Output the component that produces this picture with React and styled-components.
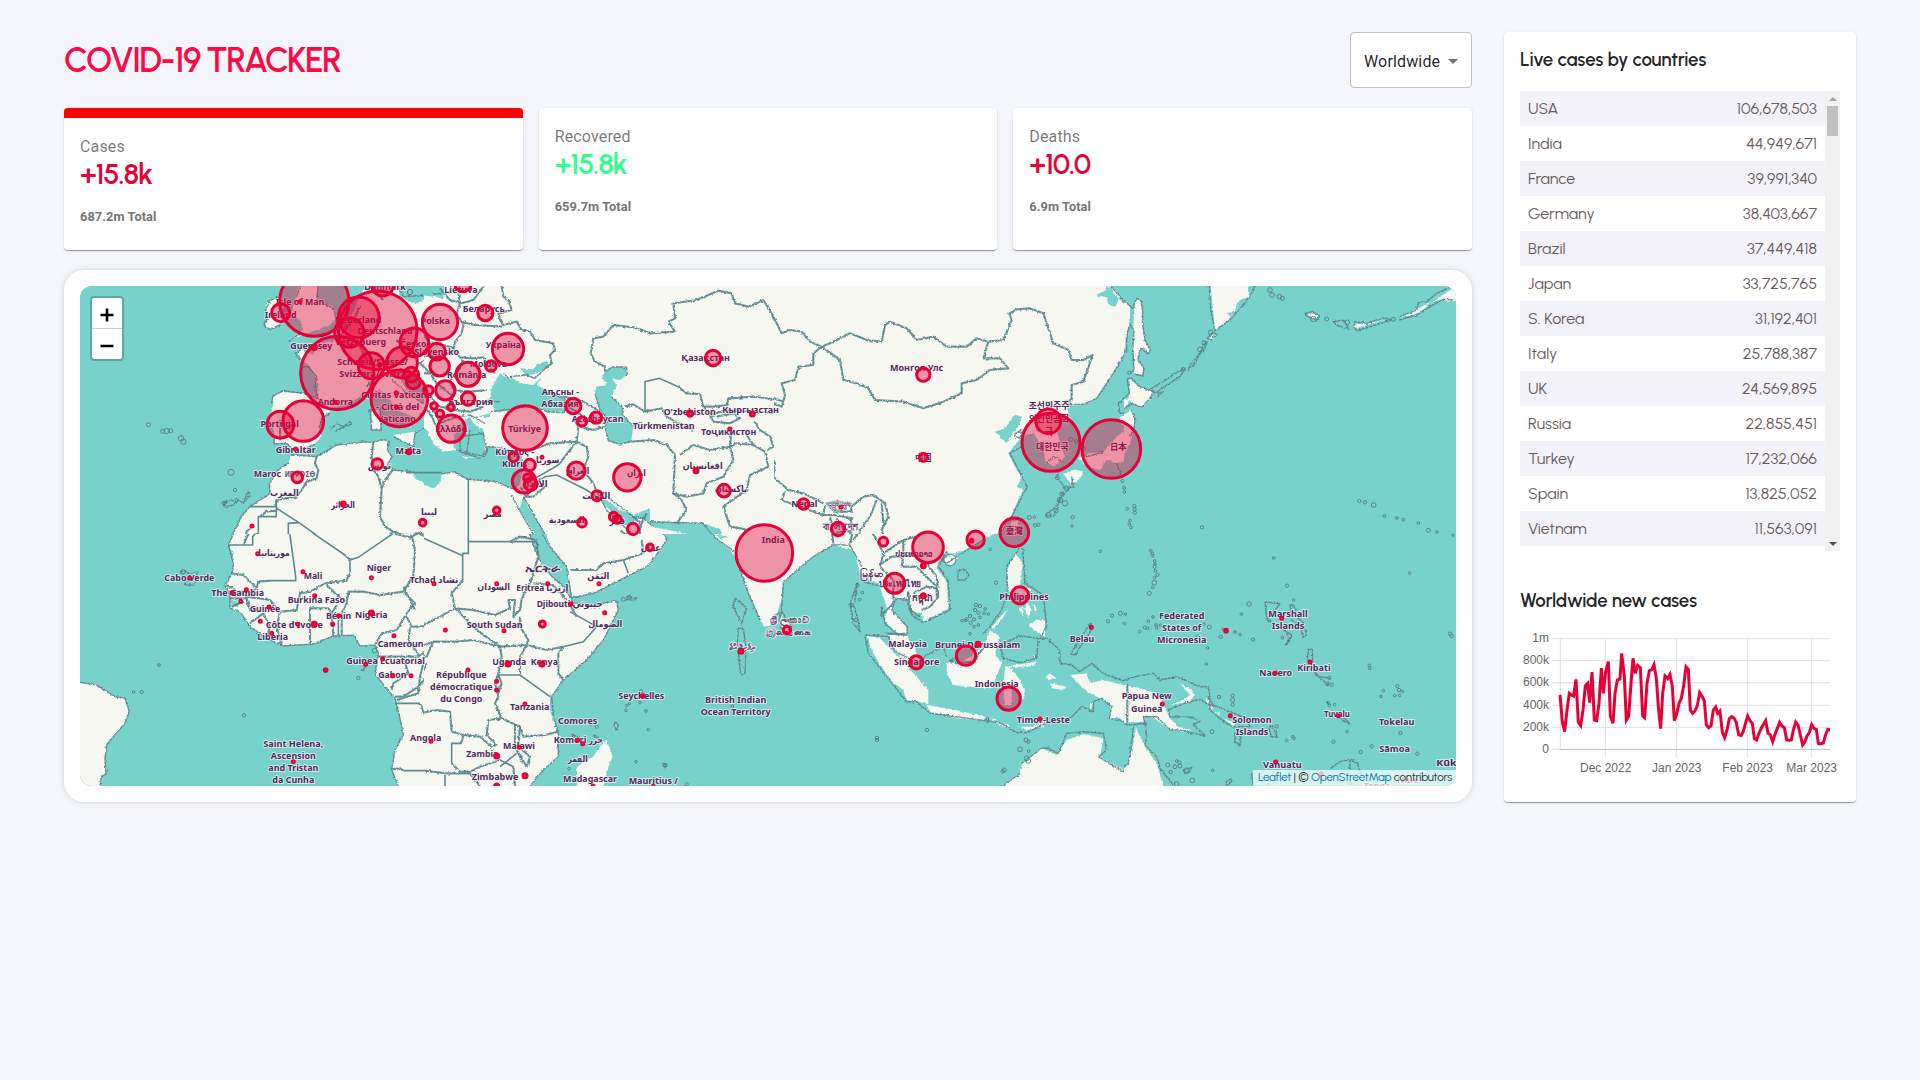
import React from "react";
import styled, { createGlobalStyle } from "styled-components";

const GlobalStyle = createGlobalStyle`
  * { box-sizing: border-box; margin: 0; padding: 0; }
  body { background: #f5f6fc; font-family: Roboto, "Liberation Sans", sans-serif; }
`;

const display = `Urbanist, Lato, "Noto Sans", sans-serif`;

const Page = styled.div`
  display: flex;
  justify-content: space-between;
  align-items: flex-start;
  padding: 32px 64px;
  min-height: 1080px;
`;
const Main = styled.main`
  width: 1408px;
  display: flex;
  flex-direction: column;
  gap: 20px;
`;
const Header = styled.header`
  height: 56px;
  display: flex;
  justify-content: space-between;
  align-items: center;
`;
const Title = styled.h1`
  padding-top: 1px;
  font: 600 34px/40px ${display};
  letter-spacing: -1.55px;
  color: #fc0a45;
`;
const Select = styled.button`
  width: 122px;
  height: 56px;
  display: flex;
  align-items: center;
  padding: 2px 13px 0;
  border: 1px solid #c0c0c4;
  border-radius: 4px;
  background: #fff;
  color: rgba(0, 0, 0, 0.87);
  font: 400 16px/19px Roboto, sans-serif;
  letter-spacing: 0.15px;
`;
const Caret = styled.span`
  margin-left: 8px;
  border: 5px solid transparent;
  border-top-color: #757575;
  border-bottom: 0;
`;
const Stats = styled.section`
  display: grid;
  grid-template-columns: repeat(3, 1fr);
  gap: 16px;
`;
const Card = styled.article`
  background: #fff;
  border-radius: 4px;
  box-shadow: 0 2px 1px -1px rgba(0, 0, 0, 0.2), 0 1px 1px rgba(0, 0, 0, 0.14), 0 1px 3px rgba(0, 0, 0, 0.12);
`;
const StatCard = styled(Card)`
  height: 142px;
  padding: 16px;
  overflow: hidden;
  border-top: ${(p) => (p.$active ? "10px solid red" : "0")};
`;
const StatLabel = styled.p`
  margin-top: 1px;
  font: 400 16px/24px Roboto, sans-serif;
  letter-spacing: 0.15px;
  color: rgba(0, 0, 0, 0.54);
`;
const StatValue = styled.h2`
  margin-top: -2px;
  font: 600 29px/34px ${display};
  letter-spacing: -1.2px;
  color: ${(p) => (p.$good ? "#32ff8a" : "#e60037")};
`;
const StatTotal = styled.p`
  margin-top: 16px;
  font: 700 12.8px/20px Roboto, sans-serif;
  letter-spacing: 0.07px;
  color: #757575;
`;
const MapCard = styled.section`
  height: 532px;
  padding: 16px;
  border-radius: 20px;
  background: #fff;
  box-shadow: 0 0 8px -4px rgba(0, 0, 0, 0.5);
`;
const MapFrame = styled.div`
  position: relative;
  height: 500px;
  border-radius: 12px;
  overflow: hidden;
  background: #76d2ca;
`;
const MapSvg = styled.svg`
  display: block;
  width: 1376px;
  height: 500px;
`;
const ZoomBox = styled.div`
  position: absolute;
  top: 10px;
  left: 10px;
  border: 2px solid rgba(0, 0, 0, 0.2);
  border-radius: 4px;
  background: #fff;
  background-clip: padding-box;
`;
const ZoomButton = styled.button`
  display: flex;
  justify-content: center;
  align-items: center;
  width: 30px;
  height: ${(p) => (p.$divided ? 31 : 30)}px;
  padding-top: 3px;
  border: 0;
  border-bottom: ${(p) => (p.$divided ? "1px solid #ccc" : "0")};
  background: none;
  color: #000;
`;
const Attribution = styled.div`
  position: absolute;
  right: 0;
  bottom: 0;
  width: 203px;
  height: 16px;
  padding: 0 5px;
  background: rgba(255, 255, 255, 0.7);
  font: 400 11.6px/15px ${display};
  letter-spacing: -0.24px;
  color: #333;
  white-space: nowrap;
  a { color: #0078a8; }
`;
const Side = styled(Card)`
  width: 352px;
  height: 770px;
  padding: 13px 16px 0;
`;
const SideTitle = styled.h3`
  font: 600 18.72px/30px ${display};
  letter-spacing: ${(p) => p.$spacing}px;
  color: rgba(0, 0, 0, 0.87);
`;
const TableBox = styled.div`
  display: flex;
  height: 460px;
  margin: 16px 0 35px;
  overflow: hidden;
`;
const Rows = styled.div`
  flex: 1;
`;
const Row = styled.div`
  display: flex;
  justify-content: space-between;
  align-items: center;
  height: 35px;
  padding: 0 8px;
  font: 400 16px/20px ${display};
  color: #6a5d5d;
  background: #fff;
  &:nth-child(odd) { background: #f3f2f8; }
`;
const ScrollTrack = styled.div`
  width: 15px;
  display: flex;
  flex-direction: column;
  align-items: center;
  padding: 6px 0 5px;
  background: #f1f1f1;
`;
const Arrow = styled.i`
  border: 4px solid transparent;
  ${(p) => (p.$down ? "border-top-color:#505050;border-bottom:0;margin-top:auto;" : "border-bottom-color:#a3a3a3;border-top:0;margin-bottom:5px;")}
`;
const Thumb = styled.i`
  width: 11px;
  height: 30px;
  background: #c1c1c1;
`;
const Chart = styled.svg`
  display: block;
  width: 330px;
  height: 160px;
  margin-top: 14px;
`;

const countries = [
  ["USA", "106,678,503"], ["India", "44,949,671"], ["France", "39,991,340"], ["Germany", "38,403,667"],
  ["Brazil", "37,449,418"], ["Japan", "33,725,765"], ["S. Korea", "31,192,401"], ["Italy", "25,788,387"],
  ["UK", "24,569,895"], ["Russia", "22,855,451"], ["Turkey", "17,232,066"], ["Spain", "13,825,052"],
  ["Vietnam", "11,563,091"],
];

/* Map tiles: origin on the map, drawn at three units per pixel.
   islands: x, y, r triples.  labels: x, baseline, text, width. markers: x, y, r. */
const tiles = [
  {
    x: 70, y: 270, h: 270,
    land: "M480,810Q500,770 515,738L540,710 600,670 598,640 625,600 655,578 665,555 690,556 740,560 800,525 880,516 910,516 940,508 958,515 952,540 966,560 952,585 968,600 1030,605 1035,625 1080,650V810ZM608,378L640,366 700,372 740,385 800,405 780,425 755,440 745,470 755,500 735,520 700,535 675,540 650,520 612,522 612,480 600,450 610,400ZM690,262L680,245 700,240 730,255 740,220 790,215 800,190 830,175 860,100 880,60 930,60 940,48 985,48 990,85 1040,100 1080,80V350L1060,330 1020,305 990,320 1010,360 1060,400 1075,440 1050,430 1040,460 1020,470 1030,440 980,420 960,390 930,360 910,370 870,380 840,400 800,410 740,390 745,340 720,290ZM970,495L1035,485 1030,530 1000,515ZM905,412L930,415 930,480 905,480ZM690,30L745,30 740,90 790,110 800,140 780,165 700,195 655,212 700,180 690,150 665,130ZM592,95L630,80 640,100 632,160 600,178 582,165 597,140 585,120Z",
    coast: "M480,810Q500,770 515,738L540,710 600,670 598,640 625,600 655,578 M665,555L690,556 740,560 800,525 880,516 910,516 940,508 958,515 952,540 966,560 952,585 968,600 1030,605M605,400L608,378 640,362 700,370 740,385M612,522L612,500M735,522L700,540 675,540 645,520 610,522M690,270L675,250 695,238M780,430L755,445 748,475M970,500L1030,530 1035,490 1070,470 1075,440 1050,430M900,420L930,415 935,480 905,480ZM655,215L690,190 660,175M690,48L680,80M592,95L630,78 M632,165L600,178 580,165 597,140 585,120 600,95M745,48L740,90 790,115 800,150M745,390L735,350 740,320 715,290 695,290M470,690L460,710M500,700L485,690 460,700 465,710 490,705 505,690 520,700 540,675 535,665 520,695M780,480L800,460 820,470 840,455 845,462 820,472 795,485M985,50L1000,80 1080,75M965,330L990,350 1010,370 1060,400",
    border: "M740,560L735,580 745,600 740,625 710,635 695,660 680,680 620,690 618,710M568,740L590,725 620,722M910,516L905,560 912,600 925,620 935,655 930,740 945,770 970,785 940,810M935,655L945,630 968,600M970,785L1020,800 1045,788 1080,800M525,810L530,785 545,770M870,110L850,150 810,200M890,190L870,230 890,270 940,300 1000,300M945,300L890,350M910,60L940,90M980,210L1010,240 1050,240M630,450V510M1080,255L1050,280 1080,310",
    straight: "M618,690V710H540M620,710L618,740H565V790L550,795 545,810M620,715L690,760 760,810M655,810V760L685,758M1008,608H1080",
    islands: "235,464,6 290,483,8 302,482,6 278,484,6 333,505,8 340,515,8 483,607,9 495,660,5 1020,66,8 500,690,5 462,700,6",
    labels: [[690,104,"Isle of Man",146],[632,143,"Ireland",95],[945,60,"Danmark",125],[864,160,"Nederland",140],[945,191,"Deutschland",165],[873,226,"Lëtzebuerg",150],[724,236,"Guernsey",126],[1030,230,"Česko",78],[908,285,"Schweiz/Suisse/",212],[908,321,"Svizzera/Svizra",200],[980,384,"Civitas Vaticana",212],[983,420,"- Città del",130],[980,457,"Vaticano",115],[796,406,"Andorra",106],[629,471,"Portugal",115],[677,548,"Gibraltar",120],[1015,552,"Malta",77],[592,620,"Maroc",82],[690,620,"ⵍⵎⵖⵔⵉⴱ",92,1],[643,677,"المغرب",86],[819,714,"الجزائر",72],[928,596,"تونس",70]],
    markers: "733,95,104 632,128,27 690,95,3 938,45,33 923,181,118 866,142,61 838,188,44 802,309,110 732,232,7 796,397,3 904,287,39 996,278,46 930,284,3 1024,314,22 1030,335,21 1033,217,43 988,385,85 979,368,3 980,411,3 700,453,61 631,464,40 677,537,3 1017,545,6 922,582,16 682,622,16 820,702,6 546,768,3",
  },
  {
    x: 420, y: 270, h: 270,
    land: "M0,0H1080V810H0Z",
    sea: "M0,30H75L70,85 40,80 0,75ZM0,465L20,480 40,520 70,545 110,540 130,565 190,560 205,530 245,540 280,545 300,540 310,580 300,640 285,660 230,635 145,628 100,605 65,612 60,640 40,655 15,645 0,630ZM110,470L150,440 160,460 190,480 195,540 200,560 120,560 100,530ZM220,410L195,395 215,380 210,360 240,310 275,335 270,320 300,340 340,345 365,320 350,345 380,360 430,380 445,410 430,425 380,425 330,410 270,420 230,428ZM300,295L340,298 350,283 382,273 385,290 350,310 320,318ZM165,440L215,430 205,442ZM555,305L580,290 620,292 620,315 600,330 575,325 590,345 575,380 610,415 605,430 640,470 633,515 600,522 565,512 555,470 565,450 540,420 525,370 530,350 560,345 545,320ZM270,670L295,715 345,790 350,810H385L350,750 320,705 310,680 300,715ZM530,665L545,668 560,690 600,720 640,735 670,722 690,715 690,755 850,760 905,780V795L890,810 860,810 840,800 700,770 680,750 660,745 630,765 590,765 570,720 550,700Z",
    coast: "M145,628L100,605 65,612M145,628L230,635 285,660M280,545L245,535 205,530 195,560 110,540M210,425L270,418 330,405 380,425 430,428 445,410 430,385 380,362M275,335L250,310M555,305L580,290 620,292 620,315M525,370L540,420 565,450 555,470 565,512 600,522 635,515M575,380L610,415 605,430 640,470M275,675L295,715 345,800M310,680L350,750 385,810M530,665L560,720 590,750 640,795M560,680L600,710 640,740 670,745 700,770M690,755L850,760 880,800M115,440L150,435 195,460M120,500L190,490 200,540 180,565 120,545ZM150,480L140,550M270,320L320,315 345,325 370,300M40,72L90,68M205,395L240,395",
    border: "M245,48L250,80 265,90 275,120 235,130 240,150 250,165 290,155 305,180 330,185 345,210 400,220 405,240 390,255 395,280 370,300M120,155L165,165 250,170M120,48L115,70 120,100 110,130 130,165 125,190 105,215 100,240 120,262 160,265 190,262 205,290 225,310M60,55L90,90 125,100 160,90 190,50M0,280L30,310 50,340 95,375M100,360L150,365 200,360M0,310H30M95,375L100,420 150,425 190,410M105,240L60,265 20,255 0,265M0,180L30,220 70,225 105,235M100,360L90,330 115,300 130,270M10,350L40,390 60,410 115,420M40,420L60,460 110,440M0,400L30,430 50,470M555,305V290L525,275 512,250 520,205 550,200 580,165 640,172 690,190 765,185 745,155 765,145 760,100 830,90 895,62 935,70 945,100 985,110 1030,90 1055,130 1080,190M615,410L640,403 675,425M675,425L725,415 740,440 790,470 820,480M775,350L800,370 840,372 850,410 890,410 920,405 925,385 1000,380 1080,390M890,440L940,430 960,445 930,460 880,455 870,435 920,420 1080,430M850,410L880,440M1000,450L1020,480 1050,500 1060,530 1040,540M935,470L930,530M700,510L740,525 765,555 760,670 800,680 850,670 860,640 910,620 940,570 930,530 950,520 1000,525M635,515L700,510M930,530L870,540 820,525 780,555M760,670L785,690 800,720 770,760M1000,525L1035,545 1045,590 990,615 980,660 910,710 930,770 990,780M1000,525L970,480M310,550L390,520 470,515 500,530 505,560 490,600 520,640 530,665M470,515L450,540 415,585M345,640L320,680 300,650M345,640L375,650 340,680 310,680M445,410L490,440 540,460M460,445L475,470 470,515M430,380L490,395 540,425M480,470L520,480 550,470M600,780L625,800 660,800V770L680,730M640,740L660,760",
    straight: "M675,425V335L718,325 775,350M145,628V810M415,585L345,625M345,640L375,620 410,615 500,660 530,680M0,608H65",
    islands: "",
    labels: [[123,70,"Lietuva",100],[191,127,"Беларусь",126],[46,161,"Polska",88],[50,254,"Slovensko",134],[250,235,"Україна",106],[205,291,"Moldova",112],[140,324,"România",118],[152,405,"България",134],[94,486,"Ελλάδα",96],[314,487,"Türkiye",98],[421,374,"Аҧсны -",112],[420,411,"Абхазия",112],[533,455,"Azərbaycan",155],[284,555,"Κύπρος -",116],[284,590,"Kıbrıs",76],[383,578,"سوريا",70],[473,612,"العراق",70],[345,650,"الأردن",76],[649,618,"ایران",56],[529,686,"الكويت",84],[592,762,"قطر",46],[440,758,"السعودية",108],[218,742,"مصر",54],[27,734,"ليبيا",48],[857,273,"Қазақстан",146],[809,434,"O'zbekiston",156],[731,478,"Türkmenistan",186],[992,430,"Кыргызстан",170],[926,494,"Тоҷикистон",166],[848,598,"افغانستان",120],[933,667,"پاکستان",96]],
    markers: "60,156,53 129,40,25 196,129,23 264,237,47 51,245,25 59,289,29 213,288,16 144,313,36 76,361,29 144,386,20 25,361,14 42,408,10 60,431,11 93,412,10 94,476,41 315,474,67 460,408,23 486,454,14 528,443,17 281,561,14 366,562,3 329,585,17 312,634,35 323,623,12 332,643,19 469,602,26 622,622,41 531,677,15 230,721,10 8,758,10 486,758,13 581,740,13 592,748,12 639,777,17 810,431,8 997,432,6 929,477,3 828,602,6 912,662,19 879,264,23",
  },
  {
    x: 770, y: 270, h: 270,
    land: "M0,0H1080V810H0Z",
    sea: "M1010,20L1030,70 1050,90 1080,120V20ZM978,75L1005,62 1010,48 1030,55 1050,80 1035,110 1015,105 1010,82ZM1080,170L1065,250 1030,310 980,385 940,405 905,408 900,385 890,400 895,430 860,480 870,520 885,560 850,590 825,570 820,530 800,505 790,490 755,500 735,525 715,550 735,590 755,625 740,650 760,660 740,700 725,735 690,790 670,810H1080ZM675,485L705,475 735,435 755,440 745,470 720,500 710,520 690,500Z",
    islandLand: "M880,612L915,598 940,605 930,625 905,645 890,625ZM925,565L960,550 1000,545 1040,500 1080,470V570L1040,580 1010,570 990,600 950,590ZM1050,440L1080,430V480L1050,460ZM725,755L745,752 740,790 725,810 712,790Z",
    coast: "M1022,48L1050,80 1080,118M1080,165L1065,250 1030,310 980,385 940,403 880,405M755,530L720,550 772,650 725,740 690,790 640,810M735,490L755,480 750,505 735,500ZM870,600L860,620 885,655 910,650 905,620M900,650L870,690 850,740 830,735 860,705 880,665M1080,330L1075,370 1045,400 1050,430 1080,430M940,550L950,560 1000,545M830,580L850,560 880,575M1040,580L1055,620",
    border: "M0,120L35,190 60,180 95,185 120,215 155,230 190,215 240,190 290,210 335,215 345,165 360,155 410,175 440,210 490,200 530,230 590,230 620,205 655,215 700,210 725,150 718,130 740,118 780,115 820,130 850,220 895,240 905,270 940,270 968,255 940,335 905,345V390L885,395M155,230L210,270 220,330 260,340 295,355 315,390 400,395 460,415 520,395 575,370V340L620,330 660,300 715,295 690,265 640,265 655,215M155,230L130,250V285L85,290 75,330 35,340 45,375 35,410 0,395M0,380L40,395M0,550L15,580 10,620 55,660 100,670 160,700M35,690L45,665M35,690L100,715 160,735 165,705M160,735L190,735 250,745M170,700L200,695 240,700 245,725 190,725ZM245,710L280,680 310,675 345,700 355,740 335,780 345,810M320,690L300,740 270,780 265,810M240,745L250,780 190,790M180,740L195,810M200,745L215,770 245,790M335,700L340,760M400,810L420,800",
    islands: "1078,308,7 862,623,6 890,655,7 870,690,8 875,672,6 885,700,8 858,722,7 835,735,8 908,742,5 906,768,4 778,742,6 793,742,4 795,766,5 805,764,5 1058,633,5 1063,653,5 1063,666,4 1073,716,4 902,508,6 918,514,5 940,535,6 805,478,5",
    labels: [[440,303,"Монгол Улс",160],[460,573,"中国",50],[837,416,"조선민주주",122],[837,455,"의인민공화",122],[837,495,"국",25],[847,539,"대한민국",98],[1045,541,"日本",50],[103,710,"Nepal",78],[208,715,"འབྲུག་ཡུལ",70,1],[210,780,"বাংলাদেশ",104],[733,791,"臺灣",52]],
    markers: "460,314,20 460,562,12 835,454,37 843,517,87 1024,537,88 101,702,16 213,711,3 204,777,20 733,787,43 -17,849,85",
  },
  {
    x: 1120, y: 270, h: 270,
    land: "M0,80L30,110 30,160 18,190 15,240 0,262ZM45,90L60,85 66,110 65,160 75,210 90,240 85,248 70,232 55,245 50,270 70,295 68,315 40,310 42,270 38,230 40,165ZM30,325L55,350 100,365 90,390 65,412 35,400 25,385 28,360ZM10,435L35,420 45,450 42,480 30,520 0,570V480ZM272,30L272,48 285,182 325,150 345,128 385,80 383,30ZM930,105L960,80 1030,35V88L985,95 960,88Z",
    sea: "M385,85Q345,85 348,120L340,130 360,118 385,90ZM322,130L350,120 335,145Z",
    islandLand: "M0,390L30,385 20,410 0,410ZM265,205L290,190 280,210ZM700,165L750,158 810,148 760,160 705,175ZM840,140L880,125 930,95 915,115 880,135ZM565,130L595,135 590,145 565,138Z",
    coast: "M0,80L38,115 50,85 62,90 68,120 68,160 75,210 92,240 85,252 62,235 55,265 72,295 68,318 42,312M0,268L20,240V195L30,165 42,180 38,240 42,300 30,310M20,325H35L60,350 100,365 90,385 65,412 35,400 0,425M268,48L272,120 285,182 330,150 370,105 395,70 405,48M35,420L45,450 42,480 30,500M22,330L28,370 5,390M275,190L290,190 275,210 262,205ZM245,225L262,215 250,245ZM235,255L245,240 225,280 205,298 210,285ZM165,310L195,295 180,320 140,345 105,370 95,355 145,325ZM110,370L130,365 112,378M555,130L575,125 600,138 590,150 560,138ZM640,155L670,150 688,178 650,165ZM700,170L705,155 740,160 790,143 815,150 750,170 710,182ZM838,140L890,120 895,98 920,95 950,70 990,52M838,150L890,135 930,110 970,88 1000,90",
    islands: "450,60,7 456,75,7 478,80,7 487,85,6 272,187,7 252,218,6 240,238,7 190,298,6 620,147,6 682,157,7 580,147,8 820,148,6 718,693,5 735,697,5 761,705,7 793,738,4 831,744,4 850,749,4 895,759,4 925,781,6 951,786,4 999,796,4 246,772,5 8,633,4 13,654,4 13,666,4 22,716,4 43,708,5 44,718,5 44,728,5 30,751,4 28,762,4 33,772,4 28,308,5",
    labels: [], markers: "",
  },
  {
    x: 70, y: 530, h: 280,
    land: "M495,0L475,45 490,100 487,130 465,165 480,195 480,235 510,245 540,290 590,325 640,348 730,342 790,318 850,316 870,348 915,345 925,370 915,430 945,470 975,505 990,565 1000,615 975,660 965,720 985,768V840H1080V0ZM0,455L80,465 135,500 165,505 178,545 165,580 130,620 110,640 105,690 108,730 95,740 90,840H0Z",
    sea: "M478,55L490,65 488,80 480,75ZM482,210L505,215 505,232 485,228Z",
    coast: "M495,0L475,45 490,100 487,130 465,165 480,195 480,235 510,245 540,290 590,325 640,348 730,342 790,318 850,316 870,348 915,345 925,370 915,430 945,470 975,505 990,565 1000,615 975,660 965,720 985,768M30,457L80,465 135,500 165,505 178,545 165,580 130,620 110,645 105,690 108,732 95,740 90,768M330,125L345,120 355,132 380,125 382,145 372,165 345,165 350,145ZM878,420L885,405 888,412 880,422Z",
    border: "M520,45L540,0M600,152L565,155 560,175 550,165 520,135 485,130M970,10L1020,22 1045,10 1080,25M840,90L825,75M840,125L830,152 765,160 720,185 690,190 680,240 630,245M1025,15L1035,60 1030,140 1000,185 930,195 880,185 835,185 830,220 815,250V315M770,165L800,195 825,215M800,225L785,250 790,318M720,235V340M720,235H775L785,250M1000,185L1035,220 1010,250 980,300 935,310 915,345M1000,170L1035,240M1010,260L1025,290 1080,288M1020,295L1015,330 1050,380M925,380H1040L1080,360M1000,380L1015,430 970,460 965,480M1080,430L1045,470 1000,500 975,500M1065,380L1050,440 1045,490 980,510M1050,520L1065,555H1080M965,718L990,715 1000,722M470,165L530,200 600,210 630,245 620,290 635,345M480,205H530L535,230M485,230L520,215M540,280L580,250 600,290 590,320M560,175L530,200M480,185H540M530,205L540,240 570,245",
    straight: "M475,45H548V20L565,0M658,0L677,140V152H600M715,0L825,75M840,125V90L865,82 970,10M805,250V315M975,520H1050M1000,722H1080",
    islands: "267,405,4 191,486,4 215,486,5 522,556,5 865,444,5 914,362,7 340,125,6",
    labels: [[612,78,"موريتانيا",94],[729,146,"Mali",56],[927,122,"Niger",74],[358,153,"Cabo Verde",150],[503,197,"The Gambia",158],[739,220,"Burkina Faso",172],[585,245,"Guinée",92],[806,266,"Bénin",76],[904,265,"Nigeria",98],[673,293,"Côte d'Ivoire",172],[608,331,"Liberia",92],[992,350,"Cameroun",138],[947,401,"Guinea Ecuatorial",236],[967,445,"Gabon",84],[670,652,"Saint Helena,",180],[670,688,"Ascension",135],[670,724,"and Tristan",150],[670,760,"da Cunha",126]],
    markers: "563,71,3 699,125,3 359,144,3 486,188,3 529,179,3 512,214,3 597,231,3 734,197,3 571,274,3 605,310,3 683,283,3 733,283,6 788,283,3 806,257,3 904,249,6 904,143,3 972,317,3 938,386,3 887,403,3 767,420,4 968,437,3 1023,437,3 670,695,3",
  },
  {
    x: 420, y: 530, h: 280,
    land: "M0,0H325L345,60 385,130 440,180 460,220 520,225 590,212 595,240 550,330 500,390 430,450 395,500 400,560 415,610 415,680 370,720 330,768V840H0ZM375,0L390,50 440,110 455,200 520,190 600,150 680,110 720,60 742,25 720,0ZM870,0L900,35 930,60 950,85 985,190 1020,270 1035,290 1060,280 1080,240V0ZM560,630L578,680 565,710 550,768V840H475L470,710 520,680 540,650Z",
    sea: "M890,15L925,18 900,28ZM390,490L400,505 398,570 390,540Z",
    coast: "M358,0L390,50 440,110 455,205 520,190 600,150 680,110 720,60 742,25 720,0M325,0L345,60 375,120 435,175 460,220 520,225 590,212 595,240 550,330 500,390 430,450 395,500 400,560 415,610 415,680 370,720 330,768M865,0L900,35 945,65M950,85L985,190 1020,270M945,203L980,235 965,282 940,230ZM955,295H970L978,350 975,430 962,435 952,340ZM620,200L650,205 640,212 620,208ZM585,574L595,585 590,600 582,588ZM455,612L480,625 M520,615L535,625M730,700L740,705 735,715Z",
    border: "M128,150L95,190 105,235 60,260 0,290M350,35L355,80 330,160 305,205 300,240 280,260 285,210 265,210 270,235 225,255 160,240 105,235 170,300 240,350 320,345M270,35L300,20 350,30M300,260V290L325,330 320,345 380,360 430,350M470,260L450,225M340,160L400,165 440,210M430,350L415,370V430L430,450M0,350L40,335 110,335 160,330 240,350 245,380 235,430 225,460 235,500 225,520 245,565 205,570 200,615 230,645 215,650 180,620 130,615 125,640M95,700L120,725H150L180,710 240,690M320,345L300,380V435M245,565L300,590 310,620 375,615 415,605M300,590L295,650 330,680 320,710 290,660M285,580L285,650 310,700M0,550L50,540 90,545 95,605 130,615M0,720L80,730H150M280,710L285,768M150,730L180,768M0,385L20,380 40,335M0,445L20,400M450,120L530,120 550,100 610,90 670,70 665,30M235,435L245,460 235,490",
    straight: "M145,0V70H128V150M145,35H350M0,20L128,77M235,435H300L390,500M430,350L490,335 530,290 450,245M610,90L625,130M75,768V735M240,710L290,670M240,690L280,710M125,640H95V700",
    islands: "610,208,6 628,202,6 648,695,4 800,763,5 735,706,6 685,599,4 678,543,4 618,541,4 663,484,5 668,494,5 660,518,4 628,520,4 620,527,4 447,716,4 513,582,4 530,590,5 937,528,4 460,618,4 526,620,4",
    labels: [[42,160,"Tchad تشاد",146],[221,180,"السودان",98],[366,126,"ኤርትራ",102],[367,182,"Eritrea إرتريا",156],[449,230,"Djibouti جيبوتي",198],[535,147,"اليَمَن",66],[692,64,"عمان",60],[556,290,"الصومال",102],[224,295,"South Sudan",168],[268,404,"Uganda",102],[373,404,"Kenya",82],[124,443,"République",152],[124,480,"démocratique",188],[124,516,"du Congo",126],[329,540,"Tanzania",118],[17,634,"Angola",94],[473,582,"Comores",118],[450,639,"Komori",98],[527,639,"جزر",42],[473,696,"القمر",60],[510,757,"Madagascar",162],[700,763,"Mauritius /",148],[187,680,"Zambia",96],[297,656,"Malawi",96],[225,750,"Zimbabwe",140],[664,508,"Seychelles",138],[947,518,"British Indian",184],[947,554,"Ocean Territory",210],[967,360,"ދިވެހިރާއްޖެ",80,1]],
    markers: "42,161,3 230,161,3 383,161,3 452,222,4 537,161,3 554,248,3 690,52,10 76,300,3 252,302,3 367,282,9 264,402,6 366,402,6 144,420,3 230,454,3 230,480,3 315,522,3 33,634,3 230,678,6 298,652,3 315,737,6 230,768,6 473,630,3 488,641,3 668,498,4 519,768,3 700,768,2 963,364,6",
  },
  {
    x: 770, y: 530, h: 280,
    land: "M0,0H690L640,30 590,60 545,72 530,65 505,95 500,115 530,155 535,235 460,275 455,245 430,255 410,205 375,205 365,240 410,290V315L385,310 345,275 350,230 330,170 325,160 275,140 250,60 190,45 130,80 40,155 35,210 20,250 0,260ZM30,255L65,290 60,318 35,312ZM520,90L545,70 565,85 545,105 525,103ZM355,315L400,310 430,340 450,400 420,400 380,370ZM290,318L330,325 380,375 440,440 475,480V520L410,510 400,480 360,450 310,370ZM470,525L560,540 645,560 640,572 560,565 480,545ZM530,400L580,395 640,350 660,300 690,320 675,370 695,400 665,475 600,470 550,465 530,430ZM705,410L800,395 790,408 720,412 750,450 765,485 755,515 740,480 725,475 725,525 705,525 700,470ZM715,180L712,120 735,70 758,100 750,170 780,175 780,195 730,190ZM775,185L790,200 785,215ZM775,285L800,270 825,270V320L790,300ZM665,290L710,240 705,255 670,300ZM900,435L950,430 960,460 1000,450 1080,470V580L1040,560 1020,570 1020,520 960,490 940,475ZM700,768L750,730 755,700 815,655 860,675 890,630 940,612 1000,625 990,680 1060,720 1075,700 1080,690V840H690ZM680,580L720,585 715,592 690,588ZM745,590L790,590 840,565 820,590 770,600ZM840,460L890,470 880,480 845,475ZM665,565L680,568 672,575Z",
    islandLand: "M745,235L760,230 760,260ZM770,215L785,240 775,265 765,245ZM790,220L800,235 795,250ZM790,375L800,378 796,390ZM825,440L840,430 860,445 835,450ZM750,490L760,500 752,510ZM960,515L970,525 960,540Z",
    coast: "M190,45H240L275,110 M190,45L130,80 40,155 35,240 20,255M640,30L590,60 530,100 515,90 530,65 505,110 535,155 540,240 460,278 425,255 410,208 378,205 365,240 412,290V310L380,312 345,280 335,230M285,320L295,370 410,515 440,515 480,550 690,578 740,608 770,608 850,570M285,315L360,320M355,320L375,365 450,400 460,380 520,350M748,55L710,110 712,185 695,240 660,290M758,55L765,160 820,195 830,290 810,325 750,318 690,345 700,385 750,398 800,385 805,325 830,325 870,360V400L905,405 930,425 965,400 1000,430 1080,460M660,290L640,310M1080,580L1018,565 1025,530 995,505 970,515V545L935,530 900,565 850,580M262,160L240,220 250,280 270,305 262,260 252,230ZM280,155L330,168M35,245L65,290 60,318 40,315 28,270ZM565,120H585L597,135 585,150 562,150ZM960,280L970,290 915,375 902,372ZM700,768L750,730M755,700L815,655 835,655 865,670 890,610 940,605 1000,610 1010,660 985,680 1060,725 1080,690M530,380L520,350",
    border: "M185,0L190,40M250,0L240,40M400,30L340,70 330,110 370,150V220L340,250M400,30V80L395,110H440L470,140 500,170V200M400,30L440,20M430,190L470,170 500,175M415,185L420,240 450,260M470,100L500,140 505,200 480,230 455,240M335,100L365,80 400,80M340,70L320,30 300,0M270,0L250,30M540,390L560,400 610,395 650,340M540,395L560,380M350,310L410,315M335,230V260",
    straight: "M1075,460V580",
    islands: "540,90,18 678,158,5 661,58,4 991,64,4 277,188,4 269,209,4 262,165,5 256,190,5 245,225,5 258,270,5 471,600,5 321,624,5 321,630,5 768,630,6 776,635,5 750,658,7 776,663,4 703,720,6 698,724,5 600,311,4 1014,274,5 1026,257,5 1051,250,6 1066,252,4 1063,280,4 0,543,3 618,225,5 630,228,5 615,240,5 625,248,5 645,237,4 655,252,4 642,250,4 600,258,5 612,268,5 590,268,5 576,272,4 586,271,4 602,278,5 625,285,4 612,290,4 630,262,4 770,685,7 775,693,7 652,567,4",
    labels: [[10,38,"India",70],[306,142,"မြန်မာ",72],[432,80,"ປະເທດລາວ",112],[389,172,"ประเทศไทย",126],[457,213,"កម្ពុជា",62],[58,280,"ශ්‍රී ලංකාව",118,1],[55,315,"இலங்கை",136],[413,351,"Malaysia",116],[623,353,"Brunei Darussalam",256],[440,406,"Singapore",136],[680,471,"Indonesia",132],[820,578,"Timor-Leste",160],[762,210,"Philippines",148],[936,337,"Belau",74]],
    markers: "340,35,13 474,52,46 617,29,26 605,32,4 374,160,30 460,107,6 460,197,6 750,196,26 588,377,29 624,343,6 439,397,20 716,506,35 810,567,3 964,292,3 51,300,11",
  },
  {
    x: 1120, y: 530, h: 280,
    land: "M0,462L60,475 120,495 130,525 150,565 175,590 215,600 190,605 150,600 110,570 80,555 70,575 0,580ZM48,595L75,650 110,700 130,768V840H0V722L25,700 40,640ZM180,460L215,480 225,495 205,515 150,525 190,510 210,495ZM255,500L275,520 280,540 265,530ZM285,545L300,548 298,556ZM335,555L365,565 360,572ZM310,565L345,580 340,590Z",
    coast: "M0,455L45,440 100,430 120,450 170,440 205,455 240,470H265L275,530 240,508 200,518 145,540 150,560 215,562 240,575 220,582 255,618 180,600 150,600 110,560 70,560 75,580 30,585 0,578M40,590L35,640 25,700 0,722M75,580L80,620 75,645 110,680 120,715 160,765M265,500L280,525 330,545 380,565 390,590 340,590 310,575 270,540ZM345,610L362,620 360,648 345,635ZM445,590L460,590 472,622 455,620ZM435,215L480,222 440,268ZM510,225L520,225 535,265 545,270 560,315 550,322 540,290 515,270ZM440,268L515,315 498,345 515,320M495,345L510,330 485,280M565,358H577L578,395 562,390ZM580,425L600,440 630,445 625,465 600,445ZM665,555L690,582 682,580 655,560ZM632,715L660,695 690,688 712,700 725,740M690,688V720M395,730L400,768M318,755L335,745 335,755 320,768ZM190,720L215,712 210,725 195,730ZM620,515L628,525",
    border: "M22,462V578",
    islands: "461,84,4 869,130,4 501,167,5 521,210,4 387,222,7 364,252,4 926,3,5 951,6,4 999,15,4 99,261,4 85,273,4 74,293,5 83,295,4 59,305,4 13,281,4 16,252,4 4,248,5 268,291,6 251,283,4 345,306,4 360,314,4 302,321,5 310,298,4 262,354,4 259,402,4 399,329,5 487,323,4 990,311,5 995,318,5 748,406,4 749,415,4 232,320,4 108,285,4 110,293,4 122,286,4 92,62,4 97,70,4 99,77,4 104,93,4 105,102,4 104,110,5 106,122,4 112,134,5 104,143,4 103,158,7 98,172,4 88,190,6 297,501,5 338,497,5 338,510,6 338,524,5 276,605,6 278,721,4 217,751,7 470,589,5 500,631,4 518,620,4 522,625,4 640,635,5 722,666,5 755,649,5 841,609,5 892,671,5 681,605,4 644,524,4 625,518,4 628,526,4 790,482,4 783,499,4 832,468,5 837,480,5 847,484,4 824,497,4 839,496,4 143,705,6 152,726,5 165,710,6 170,693,4 178,697,5 180,708,6 200,721,7 170,762,7 621,463,4 635,464,5 628,443,5 690,760,5 445,765,5",
    labels: [[185,267,"Federated",136],[185,303,"States of",118],[185,340,"Micronesia",148],[504,260,"Marshall",118],[504,296,"Islands",98],[467,438,"Naoero",98],[582,424,"Kiribati",100],[651,562,"Tuvalu",78],[830,586,"Tokelau",106],[824,667,"Sāmoa",92],[984,707,"Kūki",70],[487,714,"Vanuatu",116],[80,508,"Papua New",150],[80,545,"Guinea",94],[396,578,"Solomon",118],[396,614,"Islands",98],[863,760,"Niue",64],[771,776,"Tonga",80]],
    markers: "318,302,4 485,265,3 570,396,3 466,429,3 127,522,3 331,557,3 655,557,3 467,696,3 604,732,3",
  },
];

const triples = (s) => (s ? s.split(" ").map((t) => t.split(",").map(Number)) : []);

/* Neighbouring tiles overlap by ten pixels; four are trimmed off each side so the joins stay clean. */
const Tile = ({ t }) => (
  <svg x={t.x + 4} y={t.y + 4} width="352" height={t.h - 8} viewBox={`12 12 1056 ${t.h * 3 - 24}`}>
    <rect width="1080" height="840" fill="#76d2ca" />
    <g filter="url(#rough)">
      <path d={t.land} fill="#f6f7f1" />
      {t.sea && <path d={t.sea} fill="#76d2ca" />}
      {t.islandLand && <path d={t.islandLand} fill="#f6f7f1" />}
      <g fill="none" strokeLinejoin="round">
        <path d={t.coast} stroke="#5f9c9e" strokeWidth="4.5" opacity=".75" />
        <path d={t.coast} stroke="#6d6677" strokeWidth="2.8" strokeDasharray="8 4" opacity=".8" />
        <path d={t.border} stroke="#5c9295" strokeWidth="6.5" opacity=".85" />
        <path d={t.border} stroke="#506f78" strokeWidth="2.6" strokeDasharray="10 4" opacity=".75" />
      </g>
    </g>
    {t.straight && <path d={t.straight} fill="none" stroke="#5c8b90" strokeWidth="4.8" />}
    <g fill="none" stroke="#5a7f87" strokeWidth="2.8">
      {triples(t.islands).map(([x, y, r], i) => <circle key={i} cx={x} cy={y} r={r} />)}
    </g>
  </svg>
);

const MapLabel = styled.text`
  font: 700 ${(p) => (p.$faint ? 8 : 9.2)}px "Noto Sans", "DejaVu Sans", "Noto Sans CJK KR", "Noto Sans CJK SC", sans-serif;
  fill: ${(p) => (p.$faint ? "#70607e" : "#522d5e")};
  stroke: rgba(250, 248, 248, 0.65);
  stroke-width: 2px;
  stroke-linejoin: round;
  paint-order: stroke;
  text-anchor: middle;
`;

const WorldMap = () => (
  <MapSvg viewBox="80 286 1376 500">
    <defs>
      <filter id="rough" x="0" y="0" width="1" height="1">
        <feTurbulence type="fractalNoise" baseFrequency=".12" numOctaves="2" seed="4" />
        <feDisplacementMap in="SourceGraphic" scale="9" xChannelSelector="R" yChannelSelector="G" />
      </filter>
    </defs>
    {tiles.map((t) => <Tile key={`${t.x}-${t.y}`} t={t} />)}
    {tiles.map((t) =>
      t.labels.map(([x, y, text, w, faint], i) => (
        <MapLabel key={`${t.x}-${t.y}-${i}`} $faint={faint} x={t.x + x / 3} y={t.y + y / 3} textLength={w / 3} lengthAdjust="spacingAndGlyphs">{text}</MapLabel>
      ))
    )}
    <g fill="#e60037" fillOpacity=".4" stroke="#e60037" strokeWidth="3">
      {tiles.map((t) =>
        triples(t.markers).map(([x, y, r], i) => <circle key={`${t.x}-${t.y}-${i}`} cx={t.x + x / 3} cy={t.y + y / 3} r={r / 3} />)
      )}
    </g>
  </MapSvg>
);

const yTicks = [[236, "1m"], [302, "800k"], [368, "600k"], [436, "400k"], [502, "200k"], [568, "0"]];
const xTicks = [[316, "Dec 2022"], [529, "Jan 2023"], [742, "Feb 2023"], [934, "Mar 2023"]];
const series = "180,405 187,485 194,515 201,450 208,400 214,405 221,408 228,358 235,487 242,497 249,450 256,377 263,370 269,428 276,336 283,480 290,482 297,430 304,324 310,400 317,335 325,305 331,468 339,490 345,400 352,360 360,357 365,280 373,350 379,480 386,468 393,370 399,295 406,340 413,316 421,323 428,468 434,473 441,370 448,332 456,328 462,314 469,355 475,440 482,506 488,400 495,348 503,356 510,343 517,380 523,482 530,462 537,430 544,415 551,377 558,320 565,328 571,450 578,460 585,453 592,437 599,398 606,408 613,423 619,495 626,503 633,498 640,450 647,441 653,460 660,453 667,517 674,533 681,510 688,476 695,470 702,474 709,488 716,524 723,527 730,514 737,488 743,468 750,482 757,490 763,535 770,540 777,520 784,504 791,492 797,482 804,520 811,524 818,545 825,523 832,505 839,487 846,498 853,503 860,540 867,541 874,540 880,510 887,486 894,495 900,520 908,555 914,547 921,528 928,518 935,494 942,505 949,508 955,550 962,551 970,549 976,527 983,508 990,509";

const CasesChart = () => (
  <Chart viewBox="60 210 990 480">
    <g stroke="#e0e0e0" strokeWidth="3">
      {yTicks.map(([y]) => <line key={y} x1="156" x2="990" y1={y} y2={y} />)}
      <line x1="181" x2="181" y1="236" y2="568" />
      {xTicks.map(([x]) => <line key={x} x1={x} x2={x} y1="236" y2="592" />)}
    </g>
    <line x1="181" x2="990" y1="568" y2="568" stroke="#c4c4c4" strokeWidth="3" />
    <polyline points={series} fill="none" stroke="#e60037" strokeWidth="9" />
    <g fill="#666" fontFamily="Liberation Sans, Arial, sans-serif" fontSize="36">
      {yTicks.map(([y, s]) => <text key={s} x="147" y={y + 10} textAnchor="end">{s}</text>)}
      {xTicks.map(([x, s]) => <text key={s} x={x + 1} y="636" textAnchor="middle">{s}</text>)}
    </g>
  </Chart>
);

export default function App() {
  return (
    <>
      <GlobalStyle />
      <Page>
        <Main>
          <Header>
            <Title>COVID-19 TRACKER</Title>
            <Select>Worldwide<Caret /></Select>
          </Header>
          <Stats>
            <StatCard $active>
              <StatLabel>Cases</StatLabel>
              <StatValue>+15.8k</StatValue>
              <StatTotal>687.2m Total</StatTotal>
            </StatCard>
            <StatCard>
              <StatLabel>Recovered</StatLabel>
              <StatValue $good>+15.8k</StatValue>
              <StatTotal>659.7m Total</StatTotal>
            </StatCard>
            <StatCard>
              <StatLabel>Deaths</StatLabel>
              <StatValue>+10.0</StatValue>
              <StatTotal>6.9m Total</StatTotal>
            </StatCard>
          </Stats>
          <MapCard>
            <MapFrame>
              <WorldMap />
              <ZoomBox>
                <ZoomButton $divided aria-label="Zoom in">
                  <svg width="14" height="14" viewBox="0 0 14 14"><path d="M7 .5v13M.5 7h13" stroke="#000" strokeWidth="2.6" /></svg>
                </ZoomButton>
                <ZoomButton aria-label="Zoom out">
                  <svg width="14" height="14" viewBox="0 0 14 14"><path d="M.5 7h13" stroke="#000" strokeWidth="2.6" /></svg>
                </ZoomButton>
              </ZoomBox>
              <Attribution><a>Leaflet</a> | © <a>OpenStreetMap</a> contributors</Attribution>
            </MapFrame>
          </MapCard>
        </Main>
        <Side as="aside">
          <SideTitle $spacing={-0.2}>Live cases by countries</SideTitle>
          <TableBox>
            <Rows>
              {countries.map(([name, count]) => (
                <Row key={name}><span>{name}</span><span>{count}</span></Row>
              ))}
            </Rows>
            <ScrollTrack><Arrow /><Thumb /><Arrow $down /></ScrollTrack>
          </TableBox>
          <SideTitle $spacing={-0.2}>Worldwide new cases</SideTitle>
          <CasesChart />
        </Side>
      </Page>
    </>
  );
}
